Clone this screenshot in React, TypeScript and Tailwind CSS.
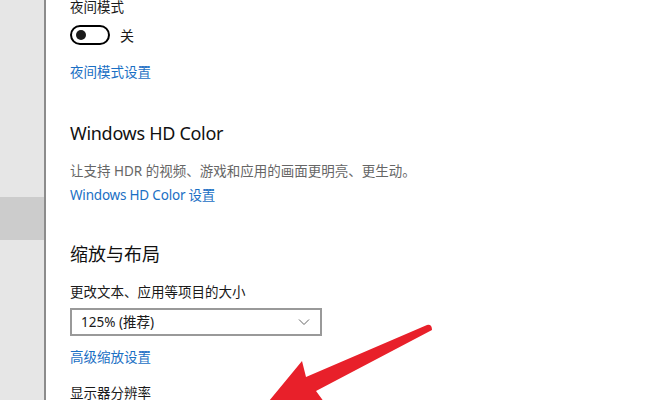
const font = { fontFamily: '"Noto Sans", "Noto Sans CJK SC", sans-serif' }

function Toggle() {
  return (
    <div className="flex h-[20px] items-center">
      <div className="flex h-[20px] w-[40px] items-center rounded-full border-2 border-black pl-[4px]">
        <span className="size-[10px] rounded-full bg-[#1a1a1a]" />
      </div>
      <span className="ml-[10px] text-[14px] text-[#1a1a1a]">关</span>
    </div>
  )
}

function Arrow() {
  return (
    <svg
      className="pointer-events-none absolute left-0 top-0"
      width="656"
      height="400"
      viewBox="0 0 656 400"
    >
      <path
        d="M427 325 Q432 324 432 330 L316 391 L330 410 L255 418 L302 361 L306 377 Z"
        fill="#e8202a"
      />
    </svg>
  )
}

export default function App() {
  return (
    <div
      className="relative flex h-[400px] w-[656px] overflow-hidden bg-white"
      style={font}
    >
      {/* sidebar */}
      <div className="flex w-[44px] shrink-0 flex-col bg-[#e6e6e6]">
        <div className="h-[197px] shrink-0" />
        <div className="h-[43px] shrink-0 bg-[#cccccc]" />
      </div>
      <div className="w-[2px] shrink-0 bg-[#8c8c8c]" />

      {/* content */}
      <div className="block pl-[24px] text-[13.5px] text-[#1a1a1a]">
        <div className="h-[14px] leading-[14px]">夜间模式</div>
        <div className="mt-[11px]">
          <Toggle />
        </div>
        <div className="mt-[17px] h-[20px] leading-[20px] text-[#1a6fc4]">
          夜间模式设置
        </div>

        <div className="mt-[37px] h-[28px] text-[18px] leading-[28px] tracking-[-0.3px] text-[#111]">
          Windows HD Color
        </div>
        <div className="mt-[14px] h-[20px] leading-[20px] text-[#666]">
          让支持 HDR 的视频、游戏和应用的画面更明亮、更生动。
        </div>
        <div className="mt-[4px] h-[20px] leading-[20px] tracking-[-0.2px] text-[#1a6fc4]">
          Windows HD Color 设置
        </div>

        <div className="mt-[35px] h-[28px] text-[18px] leading-[28px] text-[#111]">
          缩放与布局
        </div>
        <div className="mt-[14px] h-[20px] leading-[20px]">
          更改文本、应用等项目的大小
        </div>
        <div className="mt-[6px] flex h-[28px] w-[252px] items-center justify-between border-2 border-[#999] pl-[9px] pr-[10px]">
          <span>125% (推荐)</span>
          <svg width="12" height="8" viewBox="0 0 12 8">
            <path d="M1 1.5 L6 6.5 L11 1.5" fill="none" stroke="#666" strokeWidth="1" />
          </svg>
        </div>
        <div className="mt-[11px] h-[20px] leading-[20px] text-[#1a6fc4]">
          高级缩放设置
        </div>
        <div className="mt-[16px] h-[20px] leading-[20px]">显示器分辨率</div>
      </div>

      <Arrow />
    </div>
  )
}
